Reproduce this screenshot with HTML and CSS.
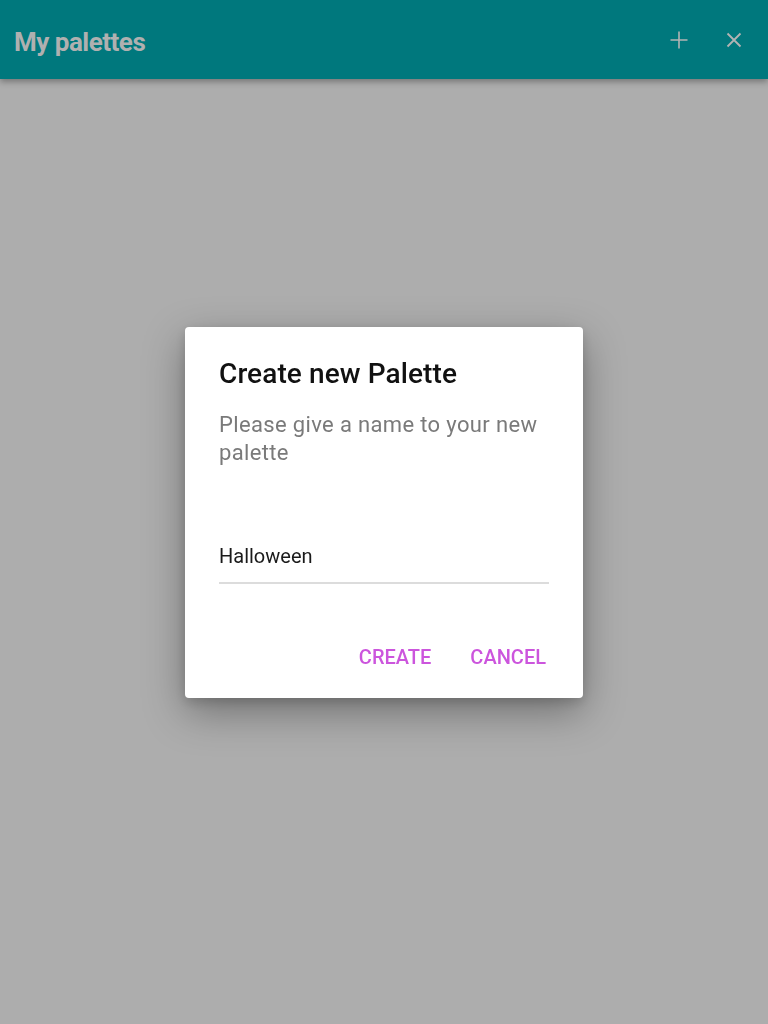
FILE: index.html
```html
<!DOCTYPE html>
<html lang="en">
<head>
    <meta charset="UTF-8">
    <meta name="viewport" content="width=device-width, initial-scale=1.0">
    <title>My palettes</title>
    <link rel="stylesheet" href="styles.css">
</head>
<body>

    <header class="toolbar">
        <h1 class="toolbar-title">My palettes</h1>
        <div class="toolbar-actions">
            <button class="icon-btn" aria-label="Add">
                <svg width="20" height="20" viewBox="0 0 20 20"><path d="M10 1.5v17M1.5 10h17" stroke="#b4b4b4" stroke-width="1.6" fill="none"/></svg>
            </button>
            <button class="icon-btn" aria-label="Close">
                <svg width="18" height="18" viewBox="0 0 18 18"><path d="M2.5 2.5l13 13M15.5 2.5l-13 13" stroke="#b4b4b4" stroke-width="1.8" fill="none"/></svg>
            </button>
        </div>
    </header>

    <div class="overlay">
        <div class="dialog">
            <h2 class="dialog-title">Create new Palette</h2>
            <p class="dialog-text">Please give a name to your new palette</p>
            <div class="field">
                <input type="text" value="Halloween">
            </div>
            <div class="dialog-actions">
                <button class="text-btn">CREATE</button>
                <button class="text-btn">CANCEL</button>
            </div>
        </div>
    </div>

</body>
</html>
```

FILE: styles.css
```css
* {
    margin: 0;
    padding: 0;
    box-sizing: border-box;
    font-family: Roboto, 'Noto Sans', sans-serif;
}
body {
    background-color: #adadad;
    height: 100vh;
}
.toolbar {
    background-color: #00787d;
    height: 79px;
    display: flex;
    align-items: center;
    justify-content: space-between;
    padding: 0 14px;
    box-shadow: 0px 3px 6px rgba(0, 0, 0, 0.3);
}
.toolbar-title {
    color: #b0b0b0;
    font-size: 26px;
    font-weight: 700;
    letter-spacing: -0.5px;
    margin-top: 4px;
}
.toolbar-actions {
    display: flex;
    gap: 35px;
    margin-right: 10px;
}
.icon-btn {
    background: none;
    border: none;
    width: 20px;
    height: 20px;
    display: flex;
    align-items: center;
    justify-content: center;
}
.overlay {
    position: fixed;
    inset: 0;
    display: flex;
    justify-content: center;
    align-items: center;
}
.dialog {
    background-color: #ffffff;
    width: 398px;
    height: 371px;
    border-radius: 4px;
    padding: 27px 34px 0 34px;
    box-shadow: 0px 14px 40px rgba(0, 0, 0, 0.35), 0px 4px 12px rgba(0, 0, 0, 0.15);
}
.dialog-title {
    font-size: 28px;
    font-weight: 500;
    color: #111;
    line-height: 40px;
    letter-spacing: 0.1px;
}
.dialog-text {
    font-size: 22px;
    letter-spacing: 0.35px;
    color: #7a7a7a;
    line-height: 28px;
    margin-top: 17px;
}
.field {
    margin-top: 73px;
    border-bottom: 2px solid #dcdcdc;
}
.field input {
    border: none;
    outline: none;
    width: 100%;
    font-size: 20px;
    color: #1a1a1a;
    padding: 4px 0 14px 0;
    background: none;
}
.dialog-actions {
    display: flex;
    justify-content: flex-end;
    gap: 39px;
    margin-top: 61px;
    margin-right: 3px;
}
.text-btn {
    background: none;
    border: none;
    color: #cc55dd;
    font-size: 20px;
    font-weight: 500;
    cursor: pointer;
}
```
